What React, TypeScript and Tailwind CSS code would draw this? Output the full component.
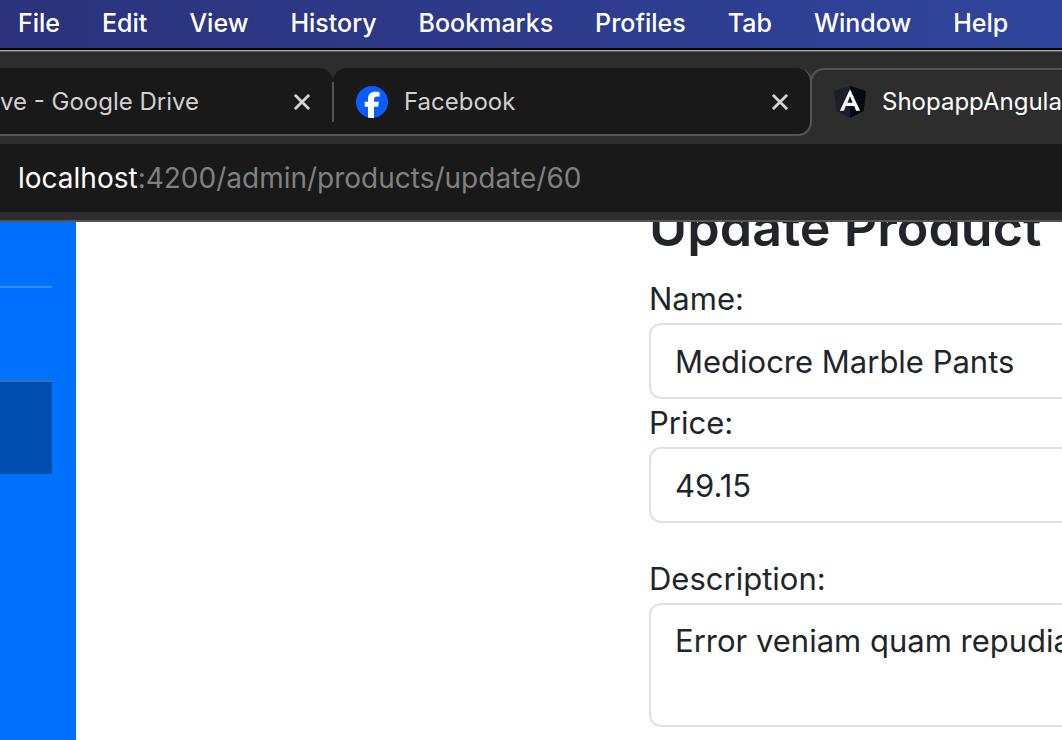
import React from "react";

const menus = ["File", "Edit", "View", "History", "Bookmarks", "Profiles", "Tab", "Window", "Help"];

function CloseIcon() {
  return (
    <svg viewBox="0 0 16 16" className="size-4" fill="none" stroke="#d4d4d4" strokeWidth="2.8" aria-hidden="true">
      <path d="M0.9 0.9 15.1 15.1M15.1 0.9 0.9 15.1" />
    </svg>
  );
}

function FacebookIcon() {
  return (
    <svg viewBox="0 0 32 32" className="size-8 shrink-0" aria-hidden="true">
      <defs>
        <clipPath id="disc">
          <circle cx="16" cy="16" r="16" />
        </clipPath>
      </defs>
      <g clipPath="url(#disc)">
        <rect width="32" height="32" fill="#0b5cff" />
        <path
          fill="#fff"
          d="M12 32V20.7H8.7v-4.9H12v-2.2C12 8.3 14.4 5.8 19.5 5.8c1.5 0 3 .1 4.1.4v4.5c-.7-.1-1.4-.1-2.2-.1-2.4 0-3.4.9-3.4 3.2v2h5l-.9 4.9H18V32z"
        />
      </g>
    </svg>
  );
}

function AngularIcon() {
  return (
    <svg viewBox="25 30 200 200" className="size-8 shrink-0" aria-hidden="true">
      <path fill="#1b1f29" d="M125 30 25 62l15 124L125 230l85-44 15-124z" />
      <path fill="#020a12" d="M125 30v200l85-44 15-124z" />
      <path
        fill="#fff"
        d="M125 50 62 184h25l12-29h52l12 29h25L125 50zm16 84h-32l16-40z"
      />
    </svg>
  );
}

function MenuBar() {
  return (
    <nav className="h-12 shrink-0 overflow-hidden bg-linear-to-r from-[#2b327b] to-[#2f459d] text-white">
      <ul className="flex h-12 items-center gap-[42px] pl-[18px] text-[25px] font-medium text-shadow-[0_2px_4px_rgb(0_0_0/0.3)]">
        {menus.map((m) => (
          <li key={m}>
            <button type="button" className="block">{m}</button>
          </li>
        ))}
      </ul>
    </nav>
  );
}

function TabStrip() {
  return (
    <div className="flex h-[84px] shrink-0 bg-[#2d2d2d] pt-4 text-[24px] text-[#d0d0d0]">
      <div className="flex h-[68px] w-[333px] shrink-0 items-center justify-between rounded-tr-[14px] border-b-2 border-[#555] bg-[#191919] pt-[2px] pr-[23px]">
        <span>ve - Google Drive</span>
        <button type="button" aria-label="Close Google Drive">
          <CloseIcon />
        </button>
      </div>
      <div className="flex h-[68px] w-[479px] shrink-0 items-center rounded-t-[14px] rounded-br-[14px] border-r-2 border-b-2 border-[#555] bg-[#191919] pt-[2px] pr-[22px]">
        <span className="-ml-px mr-[22px] h-10 w-[2px] bg-[#555]" />
        <FacebookIcon />
        <span className="ml-4 flex-1">Facebook</span>
        <button type="button" aria-label="Close Facebook">
          <CloseIcon />
        </button>
      </div>
      <div className="-ml-[2px] h-10 min-w-0 flex-1 rounded-tl-[14px] border-t-2 border-l-2 border-[#555] text-white">
        <div className="flex h-16 items-center gap-4 overflow-hidden pl-[22px] whitespace-nowrap">
          <AngularIcon />
          <span>ShopappAngula</span>
        </div>
      </div>
    </div>
  );
}

function AddressBar() {
  return (
    <div className="shrink-0 border-b-2 border-[#555] bg-[#2d2d2d] py-2">
      <div className="flex h-[68px] items-center bg-[#191919] pl-[18px] text-[28px] text-[#808080]">
        <a href="#update">
          <span className="text-white">localhost</span>:4200/admin/products/update/60
        </a>
      </div>
    </div>
  );
}

function Sidebar() {
  return (
    <aside className="w-[76px] shrink-0 bg-[#0071ff] pt-16 pr-6">
      <div className="h-[94px] border-t-2 border-[#338dff]" />
      <div className="h-[94px] border-t-2 border-[#336fb7] bg-[#004fb0]" />
    </aside>
  );
}

const field =
  "block w-full rounded-xl border-2 border-[#dee2e6] bg-white px-6 text-[#212529] outline-none";

function UpdateForm() {
  return (
    <form className="-mr-10 ml-[573px] min-w-0 flex-1 text-[31px] leading-[48px] text-[#212529]">
      <h1 className="-mt-7 mb-3.5 text-[52px] leading-[67px] font-semibold whitespace-nowrap">Update Product</h1>
      <label htmlFor="name" className="block">Name:</label>
      <input id="name" type="text" defaultValue="Mediocre Marble Pants" className={`${field} h-[76px]`} />
      <label htmlFor="price" className="block">Price:</label>
      <input id="price" type="text" defaultValue="49.15" className={`${field} h-[76px]`} />
      <label htmlFor="description" className="mt-8 block">Description:</label>
      <textarea
        id="description"
        defaultValue="Error veniam quam repudia"
        className={`${field} h-[124px] resize-none overflow-hidden py-3 whitespace-nowrap`}
      />
    </form>
  );
}

export default function App() {
  return (
    <div className="flex h-screen flex-col overflow-hidden bg-white font-['Inter',sans-serif]">
      <MenuBar />
      <div className="h-1 shrink-0 border-t-2 border-black bg-[#606060]">
        <div className="h-px bg-[#a8a8a8]" />
      </div>
      <TabStrip />
      <AddressBar />
      <main className="flex min-h-0 flex-1 overflow-hidden">
        <Sidebar />
        <UpdateForm />
      </main>
    </div>
  );
}
